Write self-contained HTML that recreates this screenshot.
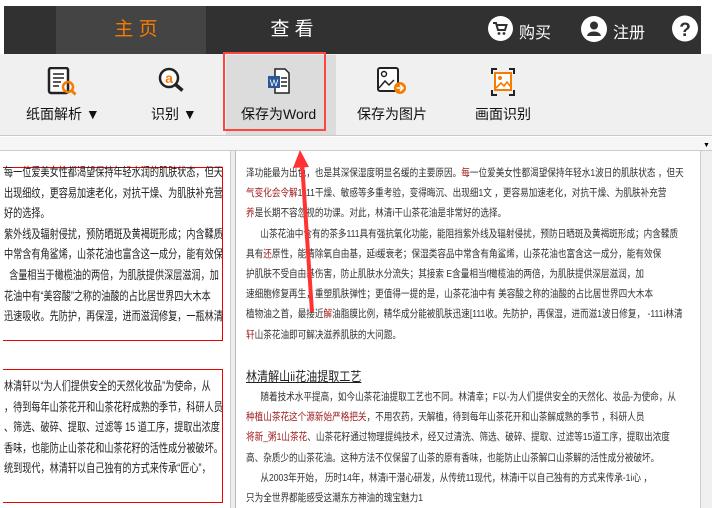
<!DOCTYPE html>
<html><head><meta charset="utf-8"><style>
*{margin:0;padding:0;box-sizing:border-box}
body{width:712px;height:508px;overflow:hidden;background:#fff;font-family:"Liberation Sans","Noto Sans CJK SC",sans-serif;position:relative}
.abs{position:absolute}
.top{left:4px;top:6px;width:697px;height:48px;background:#313131}
.tab{top:6px;height:48px;color:#fff;font-size:19px;line-height:48px;text-align:center}
.tb{left:0;top:54px;width:712px;height:82px;background:#f0f0f0;border-bottom:1px solid #c8c8c8}
.btn{top:104px;font-size:14px;color:#111;white-space:nowrap}
.clip{overflow:hidden}
.lt{font-size:12px;color:#222;white-space:nowrap;line-height:20.6px;transform:scaleX(0.76);transform-origin:0 0}
.rt{font-size:10.5px;color:#333;white-space:nowrap;line-height:20.2px;transform:scaleX(0.82);transform-origin:0 0}
.r{color:#a02020}
</style></head><body>
<div class="abs top"></div>
<div class="abs" style="left:56px;top:6px;width:150px;height:48px;background:#444"></div>
<div class="abs tab" style="left:106px;width:60px;color:#f57c00">主 页</div>
<div class="abs tab" style="left:262px;width:60px">查 看</div>
<svg class="abs" style="left:488px;top:16px" width="25" height="25"><circle cx="12.5" cy="12.5" r="12.5" fill="#fff"/><path d="M5 7h3l2 7h7l1.5-5H9" stroke="#313131" stroke-width="2" fill="none"/><circle cx="11" cy="17.5" r="1.4" fill="#313131"/><circle cx="16" cy="17.5" r="1.4" fill="#313131"/></svg>
<div class="abs" style="left:519px;top:19px;color:#fff;font-size:16px">购买</div>
<svg class="abs" style="left:581px;top:16px" width="26" height="26"><circle cx="13" cy="13" r="13" fill="#fff"/><circle cx="13" cy="9.5" r="4" fill="#313131"/><path d="M6 20c1-6 13-6 14 0z" fill="#313131"/></svg>
<div class="abs" style="left:613px;top:19px;color:#fff;font-size:16px">注册</div>
<svg class="abs" style="left:672px;top:15px" width="26" height="27"><circle cx="13" cy="13.5" r="13" fill="#fff"/><text x="13" y="21" text-anchor="middle" font-size="19" font-weight="bold" fill="#313131" font-family="Liberation Sans">?</text></svg>
<div class="abs tb"></div>
<div class="abs" style="left:226px;top:55px;width:110px;height:80px;background:#dcdcdc"></div>
<div class="abs" style="left:223px;top:52px;width:103px;height:79px;border:2px solid #f44"></div>
<!-- icons -->
<svg class="abs" style="left:47px;top:67px" width="32" height="30"><rect x="2" y="1" width="19" height="25" rx="2" fill="#fff" stroke="#222" stroke-width="2.5"/><path d="M6 7h11M6 11h11M6 15h8M6 19h6" stroke="#222" stroke-width="1.5"/><circle cx="21" cy="20" r="5" fill="none" stroke="#f57c00" stroke-width="2.5"/><path d="M24.5 23.5l4 4" stroke="#f57c00" stroke-width="3"/></svg>
<svg class="abs" style="left:157px;top:67px" width="30" height="30"><circle cx="12" cy="11" r="9" fill="#fff" stroke="#222" stroke-width="2.5"/><text x="12" y="16" text-anchor="middle" font-size="14" font-weight="bold" fill="#f57c00" font-family="Liberation Sans">a</text><path d="M18.5 17.5l7 6" stroke="#222" stroke-width="3.5"/></svg>
<svg class="abs" style="left:267px;top:67px" width="24" height="30"><path d="M8 2h10l4 4v20H8z" fill="#fff" stroke="#222" stroke-width="1.5"/><path d="M14 11h6M14 15h6M14 19h6" stroke="#222" stroke-width="1.5"/><rect x="1" y="9" width="12" height="12" fill="#2b5797"/><text x="7" y="19" text-anchor="middle" font-size="9" fill="#fff" font-family="Liberation Sans">W</text></svg>
<svg class="abs" style="left:376px;top:67px" width="32" height="30"><rect x="2" y="1" width="20" height="23" rx="2" fill="#fff" stroke="#222" stroke-width="2"/><circle cx="8" cy="7" r="2.5" fill="none" stroke="#222" stroke-width="1.5"/><path d="M3 21l6-7 4 4 5-5" stroke="#222" stroke-width="1.5" fill="none"/><circle cx="24" cy="21" r="6" fill="#f57c00"/><path d="M20.5 21h6M24 18l3 3-3 3" stroke="#fff" stroke-width="1.6" fill="none"/></svg>
<svg class="abs" style="left:490px;top:67px" width="26" height="30"><path d="M2 7V2h5M19 2h5v5M24 23v5h-5M7 28H2v-5" stroke="#222" stroke-width="2" fill="none"/><rect x="5" y="6" width="16" height="17" fill="#fff" stroke="#f57c00" stroke-width="2"/><circle cx="10" cy="11" r="2" fill="#f57c00"/><path d="M6 21l5-5 3 3 3-4 4 5" stroke="#f57c00" stroke-width="1.6" fill="none"/></svg>
<div class="abs btn" style="left:26px">纸面解析 ▼</div>
<div class="abs btn" style="left:151px">识别 ▼</div>
<div class="abs btn" style="left:241px">保存为Word</div>
<div class="abs btn" style="left:357px">保存为图片</div>
<div class="abs btn" style="left:475px">画面识别</div>
<div class="abs" style="left:0;top:137px;width:712px;height:14px;background:#f6f6f6;border-bottom:1px solid #ccc"></div>
<div class="abs" style="left:703px;top:142px;font-size:7px">▼</div>
<!-- left panel -->
<div class="abs" style="left:230px;top:151px;width:6px;height:357px;background:#eee;border-left:1px solid #ccc;border-right:1px solid #bbb"></div>
<div class="abs" style="left:3px;top:167px;width:220px;height:174px;border:1px solid #e00;border-left:none"></div>
<div class="abs" style="left:3px;top:369px;width:220px;height:134px;border:1px solid #e00;border-left:none"></div>
<div class="abs clip" style="left:4px;top:162px;width:218px;height:170px"><div class="lt">
每一位爱美女性都渴望保持年轻水润的肌肤状态，但天<br>出现细纹，更容易加速老化，对抗干燥、为肌肤补充营<br>好的选择。<br>紫外线及辐射侵扰，预防晒斑及黄褐斑形成；内含鞣质<br>中常含有角鲨烯，山茶花油也富含这一成分，能有效保<br>&nbsp;&nbsp;含量相当于橄榄油的两倍，为肌肤提供深层滋润，加<br>花油中有“美容酸”之称的油酸的占比居世界四大木本<br>迅速吸收。先防护，再保湿，进而滋润修复，一瓶林清</div></div>
<div class="abs clip" style="left:4px;top:376px;width:218px;height:120px"><div class="lt">
林清轩以“为人们提供安全的天然化妆品”为使命，从<br>，待到每年山茶花开和山茶花籽成熟的季节，科研人员<br>、筛选、破碎、提取、过滤等 15 道工序，提取出浓度<br>香味，也能防止山茶花和山茶花籽的活性成分被破坏。<br>统到现代，林清轩以自己独有的方式来传承“匠心”，</div></div>
<!-- right panel -->
<div class="abs" style="left:700px;top:151px;width:12px;height:357px;background:#f0f0f0;border-left:1px solid #ccc"></div>
<div class="abs clip" style="left:246px;top:163px;width:454px;height:190px"><div class="rt">
泽功能最为出色，也是其深保湿度明显名缓的主要原因。<span class="r">每</span>一位爱美女性都渴望保持年轻水1波日的肌肤状态 ，但天<br><span class="r">气变化会令解</span>1111干燥、敏感等多重考验，变得晦沉、出现细1文 ，更容易加速老化，对抗干燥、为肌肤补充营<br><span class="r">养</span>是长期不容忽视的功课。对此，林清i干山茶花油是非常好的选择。<br>&nbsp;&nbsp;&nbsp;&nbsp;&nbsp;&nbsp;山茶花油中含有的茶多111具有强抗氧化功能，能阻挡紫外线及辐射侵扰，预防日晒斑及黄褐斑形成；内含鞣质<br>具有<span class="r">还</span>原性，能清除氧自由基，延i缓衰老；保湿类容品中常含有角鲨烯，山茶花油也富含这一成分，能有效保<br>护肌肤不受自由基伤害，防止肌肤水分流失；其接索 E含量相当f橄榄油的两倍，为肌肤提供深层滋润，加<br>速细胞修复再生，重塑肌肤弹性；更值得一提的是，山茶花油中有 美容酸之称的油酸的占比居世界四大木本<br>植物油之首，最接近<span class="r">解</span>油脂膜比例，精华成分能被肌肤迅速[111收。先防护，再保湿，进而滋1波日修复， -111i林清<br><span class="r">轩</span>山茶花油即可解决滋养肌肤的大问题。</div></div>
<div class="abs" style="left:246px;top:366px;font-size:13px;color:#222;text-decoration:underline;transform:scaleX(0.85);transform-origin:0 0;white-space:nowrap">林清解山ii花油提取工艺</div>
<div class="abs clip" style="left:246px;top:387px;width:454px;height:121px"><div class="rt">
&nbsp;&nbsp;&nbsp;&nbsp;&nbsp;&nbsp;随着技术水平提高，如今山茶花油提取工艺也不同。林清幸；F以-为人们提供安全的天然化、妆品-为使命，从<br><span class="r">种植山茶花这个源新始严格把关</span>，不用农药，天解植，待到每年山茶花开和山茶解成熟的季节 ，科研人员<br><span class="r">将新_粥1山茶花</span>、山茶花籽通过物理提纯技术，经又过清洗、筛选、破碎、提取、过滤等15道工序，提取出浓度<br>高、杂质少的山茶花油。这种方法不仅保留了山茶的原有香味，也能防止山茶解口山茶解的活性成分被破坏。<br>&nbsp;&nbsp;&nbsp;&nbsp;&nbsp;&nbsp;从2003年开始， 历时14年，林清i干潜心研发，从传统11现代，林清i干以自己独有的方式来传承-1i心 ，<br>只为全世界都能感受这潮东方神油的瑰宝魅力1</div></div>
<!-- arrow -->
<svg class="abs" style="left:0;top:0" width="712" height="508"><path d="M312 312L302 162" stroke="#f33" stroke-width="4"/><path d="M300 150L293 168L309 167z" fill="#f33"/></svg>
</body></html>
